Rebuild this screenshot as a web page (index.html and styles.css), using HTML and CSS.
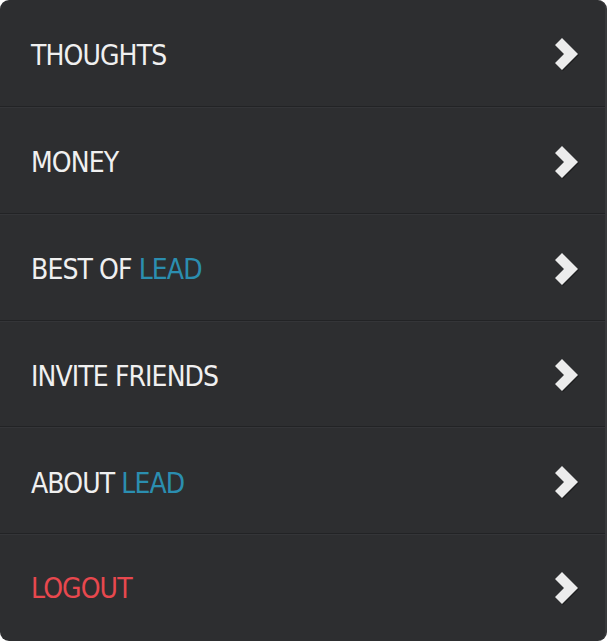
FILE: index.html
```html
<!DOCTYPE html>
<html>
<head>
<meta charset="utf-8">
<link rel="stylesheet" href="styles.css">
</head>
<body>
<nav class="menu">
  <a class="item"><span class="label">THOUGHTS</span><svg class="chev" viewBox="0 0 24 34"><polygon points="0,7 7,0 23,16 7,32 0,25 9,16"/></svg></a>
  <a class="item"><span class="label">MONEY</span><svg class="chev" viewBox="0 0 24 34"><polygon points="0,7 7,0 23,16 7,32 0,25 9,16"/></svg></a>
  <a class="item"><span class="label">BEST OF <span class="blue">LEAD</span></span><svg class="chev" viewBox="0 0 24 34"><polygon points="0,7 7,0 23,16 7,32 0,25 9,16"/></svg></a>
  <a class="item"><span class="label">INVITE FRIENDS</span><svg class="chev" viewBox="0 0 24 34"><polygon points="0,7 7,0 23,16 7,32 0,25 9,16"/></svg></a>
  <a class="item"><span class="label">ABOUT <span class="blue">LEAD</span></span><svg class="chev" viewBox="0 0 24 34"><polygon points="0,7 7,0 23,16 7,32 0,25 9,16"/></svg></a>
  <a class="item last"><span class="label red">LOGOUT</span><svg class="chev" viewBox="0 0 24 34"><polygon points="0,7 7,0 23,16 7,32 0,25 9,16"/></svg></a>
</nav>
</body>
</html>
```
FILE: styles.css
```css
html, body {
  margin: 0;
  padding: 0;
  background: #ffffff;
}
.menu {
  width: 607px;
  height: 641px;
  box-sizing: border-box;
  background: #2d2e30;
  border-radius: 9px;
  border-right: 2px solid #38393b;
  overflow: hidden;
  display: grid;
  grid-template-rows: repeat(6, 1fr);
}
.item {
  min-height: 0;
  display: flex;
  align-items: center;
  justify-content: space-between;
  padding: 5px 26px 0 31px;
  border-top: 1px solid #343538;
  border-bottom: 1px solid #222325;
  font-family: "DejaVu Sans Condensed", "DejaVu Sans", sans-serif;
  font-size: 28px;
  letter-spacing: -0.9px;
  color: #f0f0f0;
}
.item:first-child { border-top: none; }
.item.last { border-bottom: none; padding-top: 1px; }
.blue { color: #2b8eb0; }
.red { color: #e8484e; }
.chev {
  width: 24px;
  height: 34px;
  fill: #ececec;
  filter: drop-shadow(1px 1px 0 rgba(0,0,0,0.35));
}
```
